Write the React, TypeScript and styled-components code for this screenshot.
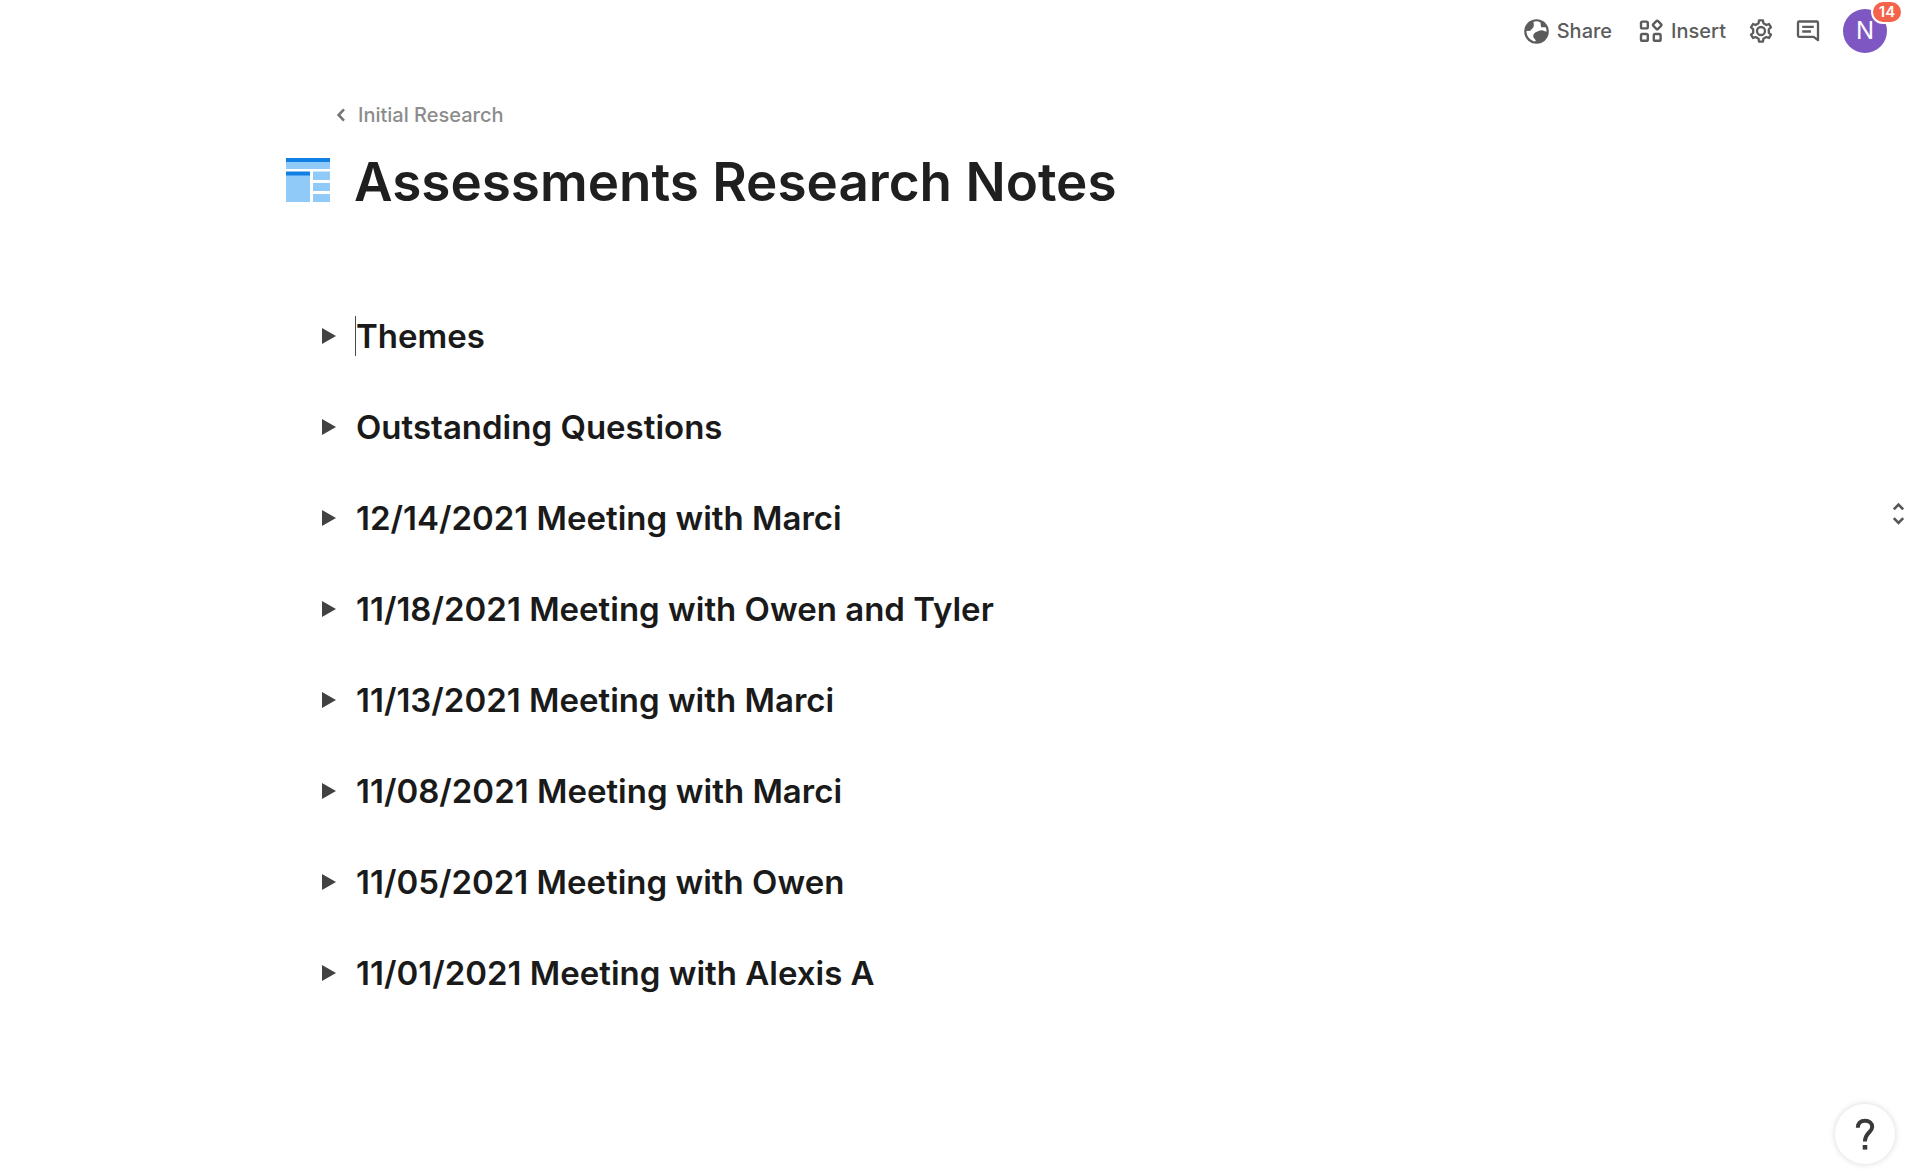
import React, { useState } from "react";
import styled, { createGlobalStyle } from "styled-components";

const GlobalStyle = createGlobalStyle`
  * { box-sizing: border-box; }
  body {
    margin: 0;
    background: #fff;
    color: #1f1f1f;
    font-family: Inter, "Liberation Sans", Arial, sans-serif;
  }
  button { font: inherit; color: inherit; background: none; border: 0; padding: 0; cursor: pointer; }
  svg { display: block; flex: none; }
`;

const Page = styled.div`
  min-height: 100vh;
`;

const Toolbar = styled.header`
  display: flex;
  align-items: center;
  justify-content: flex-end;
  gap: 23px;
  height: 62px;
  padding-right: 33px;
`;

const ToolGroup = styled.div`
  display: flex;
  align-items: center;
  gap: 27px;
`;

const ToolButton = styled.button`
  display: flex;
  align-items: center;
  gap: 8px;
  font-size: 20px;
  line-height: 24px;
  font-weight: 500;
  color: #5c5c5c;
`;

const Avatar = styled.button`
  position: relative;
  width: 44px;
  height: 44px;
  border-radius: 50%;
  background: #7e57c2;
  color: #fff;
  font-size: 24px;
  line-height: 44px;
`;

const Badge = styled.span`
  position: absolute;
  top: -9px;
  right: -16px;
  width: 32px;
  height: 24px;
  border: 2px solid #fff;
  border-radius: 12px;
  background: #f5634a;
  color: #fff;
  font-size: 15px;
  line-height: 20px;
  font-weight: 600;
  text-align: center;
`;

const Main = styled.main`
  padding: 38px 80px 80px 286px;
`;

const Breadcrumb = styled.a`
  display: inline-flex;
  align-items: center;
  gap: 10px;
  margin-left: 48px;
  font-size: 20px;
  line-height: 30px;
  font-weight: 500;
  color: #8c8c8c;
  text-decoration: none;
`;

const TitleRow = styled.div`
  display: flex;
  align-items: center;
  gap: 24px;
  margin-top: 13px;
`;

const Title = styled.h1`
  margin: 0;
  padding-top: 4px;
  font-size: 53px;
  line-height: 70px;
  font-weight: 600;
`;

const Sections = styled.div`
  display: flex;
  flex-direction: column;
  align-items: flex-start;
  gap: 51px;
  margin: 99px 0 0 36px;
`;

const SectionTitle = styled.h2`
  margin: 0;
  font-size: 33px;
  line-height: 40px;
  font-weight: 600;
  color: #1a1a1a;
`;

const SectionToggle = styled.button`
  display: flex;
  align-items: center;
  gap: 20px;
  text-align: left;
`;

const SectionLabel = styled.span<{ $caret: boolean }>`
  box-shadow: ${(p) => (p.$caret ? "-1px 0 0 #4a4a4a" : "none")};
`;

const HelpButton = styled.button`
  position: fixed;
  right: 25px;
  bottom: 7px;
  display: grid;
  place-items: center;
  width: 60px;
  height: 60px;
  border-radius: 50%;
  background: #fff;
  box-shadow: 0 0 6px rgba(0, 0, 0, 0.16);
`;

const ResizeButton = styled.button`
  position: fixed;
  top: 502px;
  right: 15px;
`;

const ShareIcon = () => (
  <svg width="25" height="25" viewBox="0 0 24 24">
    <circle cx="12" cy="12" r="11.8" fill="#5c5c5c" />
    <path
      d="M9.2 2.6 9.4 6.4Q9.4 8 8 9.2L6 11.2 2.3 11.6C2.3 16.4 5.6 20.6 10.4 21.6L11.4 20.6 9 17.6Q8.4 14.4 11.2 12.8L14.6 11.2Q17.4 10.4 19.4 11.6L21.7 12.2Q21.8 9.8 20.8 7.8L16.4 7.8 15.8 3.4Q15.2 2.6 13.6 2.3 11.2 2 9.2 2.6Z"
      fill="#fff"
    />
  </svg>
);

const InsertIcon = () => (
  <svg width="24" height="24" viewBox="0 0 24 24" fill="none" stroke="#5c5c5c" strokeWidth="2.4">
    <rect x="2" y="2.6" width="6.8" height="6.8" rx="1.4" />
    <rect x="2" y="15" width="6.8" height="6.8" rx="1.4" />
    <rect x="14.8" y="15" width="6.8" height="6.8" rx="1.4" />
    <rect x="14.9" y="2.7" width="6.6" height="6.6" rx="1.2" transform="rotate(45 18.2 6)" />
  </svg>
);

const GearIcon = () => (
  <svg width="24" height="24" viewBox="0 0 24 24" fill="none" stroke="#5c5c5c" strokeWidth="2.3" strokeLinejoin="round">
    <path d="M9.6 4.2 10 1.4H14L14.4 4.2 17.4 6 20 5 22 8.4 19.8 10.2V13.8L22 15.6 20 19 17.4 18 14.4 19.8 14 22.6H10L9.6 19.8 6.6 18 4 19 2 15.6 4.2 13.8V10.2L2 8.4 4 5 6.6 6Z" />
    <circle cx="12" cy="12" r="4" />
  </svg>
);

const CommentIcon = () => (
  <svg width="24" height="24" viewBox="0 0 24 24" fill="none" stroke="#5c5c5c" strokeWidth="2.3" strokeLinejoin="round">
    <path d="M3.2 2.5H20.8Q22 2.5 22 3.7V21.2L17.6 17.8H3.2Q2 17.8 2 16.6V3.7Q2 2.5 3.2 2.5Z" />
    <path d="M6.2 7.8H17.8M6.2 12.5H15" />
  </svg>
);

const BackIcon = () => (
  <svg width="14" height="14" viewBox="0 0 14 14" fill="none" stroke="#757575" strokeWidth="2.6">
    <path d="M10 1.4 4.6 7 10 12.6" />
  </svg>
);

const PageIcon = () => (
  <svg width="44" height="44" viewBox="0 0 44 44">
    <path d="M0 4H44V11H0ZM0 17H24V44H0ZM27 13.5H44V22H27ZM27 25H44V33H27ZM27 36H44V44H27Z" fill="#90caf9" />
    <path d="M0 0H44V4H0ZM0 13.5H24V17.5H0Z" fill="#1180e4" />
  </svg>
);

const TriangleIcon = () => (
  <svg width="14" height="16" viewBox="0 0 14 16">
    <path d="M0 0 14 8 0 16Z" fill="#424242" />
  </svg>
);

const ResizeIcon = () => (
  <svg width="13" height="24" viewBox="0 0 13 24" fill="none" stroke="#555" strokeWidth="2.6">
    <path d="M1.8 7.4 6.5 2.7 11.2 7.4M1.8 16.2 6.5 20.9 11.2 16.2" />
  </svg>
);

const HelpIcon = () => (
  <svg width="20" height="32" viewBox="0 0 20 32">
    <path d="M2.8 9.8C2.8 5 5.6 2.8 10 2.8S17.2 5.2 17.2 9C17.2 14.6 10 14.4 10 23.6" fill="none" stroke="#3a3a3a" strokeWidth="4" />
    <rect x="7.7" y="27" width="4.6" height="4.6" fill="#3a3a3a" />
  </svg>
);

const sectionNames = [
  "Themes",
  "Outstanding Questions",
  "12/14/2021 Meeting with Marci",
  "11/18/2021 Meeting with Owen and Tyler",
  "11/13/2021 Meeting with Marci",
  "11/08/2021 Meeting with Marci",
  "11/05/2021 Meeting with Owen",
  "11/01/2021 Meeting with Alexis A",
];

export default function App() {
  const [active, setActive] = useState(0);
  return (
    <Page>
      <GlobalStyle />
      <Toolbar>
        <ToolGroup>
          <ToolButton><ShareIcon />Share</ToolButton>
          <ToolButton><InsertIcon />Insert</ToolButton>
        </ToolGroup>
        <ToolButton aria-label="Settings"><GearIcon /></ToolButton>
        <ToolButton aria-label="Comments"><CommentIcon /></ToolButton>
        <Avatar aria-label="Account, 14 notifications">N<Badge>14</Badge></Avatar>
      </Toolbar>
      <Main>
        <Breadcrumb href="#"><BackIcon />Initial Research</Breadcrumb>
        <TitleRow>
          <PageIcon />
          <Title>Assessments Research Notes</Title>
        </TitleRow>
        <Sections>
          {sectionNames.map((name, i) => (
            <SectionTitle key={name}>
              <SectionToggle aria-expanded={false} onClick={() => setActive(i)}>
                <TriangleIcon />
                <SectionLabel $caret={i === active}>{name}</SectionLabel>
              </SectionToggle>
            </SectionTitle>
          ))}
        </Sections>
      </Main>
      <ResizeButton aria-label="Resize"><ResizeIcon /></ResizeButton>
      <HelpButton aria-label="Help"><HelpIcon /></HelpButton>
    </Page>
  );
}
